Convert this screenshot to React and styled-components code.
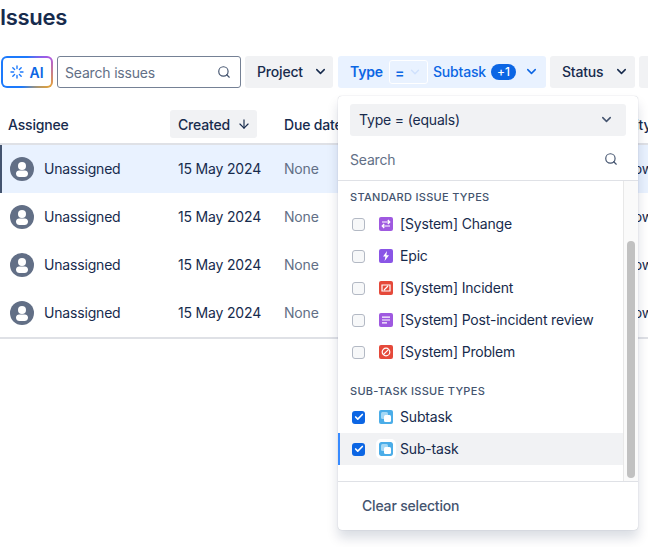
import React from 'react';
import styled, { createGlobalStyle } from 'styled-components';
import { ArrowDown, Check, ChevronDown, Search } from 'lucide-react';

const GlobalStyle = createGlobalStyle`
  html, body {
    margin: 0;
    padding: 0;
    background: #fff;
  }
  body {
    font-family: Inter, "Liberation Sans", sans-serif;
    color: #172b4d;
    font-size: 14px;
    letter-spacing: -0.18px;
  }
  * {
    box-sizing: border-box;
  }
`;

const Page = styled.div`
  position: relative;
  width: 648px;
  height: 547px;
  overflow: hidden;
`;

const Title = styled.h1`
  margin: 0;
  height: 56px;
  padding-top: 3px;
  font-size: 22px;
  line-height: 28px;
  font-weight: 600;
  letter-spacing: -0.3px;
`;

const Toolbar = styled.div`
  display: flex;
  gap: 4px;
  height: 32px;
  padding-left: 1px;
  width: 720px;
`;

const AiButton = styled.button`
  display: flex;
  align-items: center;
  justify-content: center;
  gap: 5px;
  width: 52px;
  height: 32px;
  padding: 0;
  border: 2px solid transparent;
  border-radius: 6px;
  background:
    linear-gradient(#fff, #fff) padding-box,
    conic-gradient(#1d7afc 0deg, #af59e1 58deg, #e2a13a 122deg, #1d7afc 200deg, #1d7afc 360deg) border-box;
  color: #0c66e4;
  font: 600 14px Inter, sans-serif;
`;

const SearchBox = styled.div`
  display: flex;
  align-items: center;
  justify-content: space-between;
  width: 184px;
  height: 32px;
  padding: 0 9px 0 7px;
  border: 1px solid #758195;
  border-radius: 3px;
  color: #626f86;
  font-size: 14px;
  svg {
    color: #44546f;
  }
`;

const FilterButton = styled.div`
  display: flex;
  flex: none;
  align-items: center;
  width: ${(p) => p.$width}px;
  height: 32px;
  margin-left: ${(p) => p.$gapLeft || 0}px;
  padding-left: 12px;
  padding-bottom: 1px;
  border-radius: 3px;
  background: ${(p) => (p.$active ? '#e9f2ff' : '#f1f2f4')};
  color: ${(p) => (p.$active ? '#0c66e4' : '#172b4d')};
  font-weight: 500;
`;

const FilterLabel = styled.span`
  flex: ${(p) => (p.$grow ? 1 : 'none')};
  font-weight: ${(p) => (p.$bold ? 600 : 500)};
`;

const FilterChevron = styled(ChevronDown).attrs({ size: 15, strokeWidth: 2.4 })`
  flex: none;
  margin-right: ${(p) => p.$right || 0}px;
`;

const OperatorBox = styled.span`
  display: flex;
  align-items: center;
  justify-content: space-between;
  width: 39px;
  height: 24px;
  margin: 1px 5px 0 6px;
  padding: 0 5px 0 5px;
  border: 1px solid #fff;
  border-radius: 3px;
  font-weight: 600;
  svg {
    color: #cfe1fd;
  }
`;

const CountBadge = styled.span`
  width: 25px;
  height: 16px;
  margin: 1px 8px 0 5px;
  border-radius: 8px;
  background: #0c66e4;
  color: #fff;
  font-size: 12px;
  line-height: 16px;
  text-align: center;
`;

const Table = styled.div`
  width: 648px;
  margin-top: 23px;
  border-bottom: 2px solid #dfe1e6;
`;

const HeaderRow = styled.div`
  display: flex;
  align-items: center;
  height: 34px;
  padding-bottom: 6px;
  border-bottom: 2px solid #dfe1e6;
  font-weight: 500;
  white-space: nowrap;
`;

const Row = styled.div`
  display: flex;
  align-items: center;
  height: 48px;
  padding-bottom: 1px;
  background: ${(p) => (p.$selected ? '#e9f2ff' : '#fff')};
  box-shadow: ${(p) => (p.$selected ? 'inset 2px 0 0 #44546f' : 'none')};
  white-space: nowrap;
`;

const Cell = styled.div`
  display: flex;
  flex: none;
  align-items: center;
  gap: ${(p) => p.$gap || 0}px;
  width: ${(p) => p.$width}px;
  padding-left: ${(p) => p.$pad ?? 8}px;
  color: ${(p) => (p.$muted ? '#626f86' : '#172b4d')};
`;

const SortPill = styled.div`
  display: flex;
  flex: none;
  align-items: center;
  gap: 7px;
  width: 87px;
  height: 28px;
  padding-left: 8px;
  border-radius: 3px;
  background: #f1f2f4;
  margin-right: 19px;
`;

const Popup = styled.div`
  position: absolute;
  left: 338px;
  top: 96px;
  display: flex;
  flex-direction: column;
  width: 300px;
  height: 434px;
  border-radius: 4px;
  background: #fff;
  box-shadow: 0 8px 12px rgba(9, 30, 66, 0.15), 0 0 1px rgba(9, 30, 66, 0.31);
`;

const OperatorSelect = styled.div`
  display: flex;
  align-items: center;
  justify-content: space-between;
  height: 32px;
  margin: 8px 12px 0;
  padding: 0 12px 1px 9px;
  border-radius: 3px;
  background: #f1f2f4;
  svg {
    color: #44546f;
  }
`;

const PopupSearch = styled.div`
  display: flex;
  align-items: center;
  justify-content: space-between;
  height: 45px;
  padding: 2px 20px 0 12px;
  border-bottom: 1px solid #dfe1e6;
  color: #626f86;
  svg {
    color: #44546f;
  }
`;

const ScrollArea = styled.div`
  display: flex;
  height: 301px;
  border-bottom: 1px solid #dfe1e6;
`;

const OptionList = styled.div`
  flex: 1;
  min-width: 0;
  padding-top: 10px;
`;

const GroupHeading = styled.div`
  height: 13px;
  margin: ${(p) => p.$top || 0}px 0 ${(p) => p.$bottom || 0}px;
  padding-left: 12px;
  color: #44546f;
  font-size: 11px;
  line-height: 13px;
  font-weight: 500;
  letter-spacing: 0.3px;
  text-transform: uppercase;
`;

const Option = styled.div`
  display: flex;
  align-items: center;
  height: 32px;
  margin-top: ${(p) => p.$top || 0}px;
  padding-left: 14px;
  background: ${(p) => (p.$active ? '#f1f2f4' : 'transparent')};
  box-shadow: ${(p) => (p.$active ? 'inset 2px 0 0 #388bff' : 'none')};
`;

const OptionLabel = styled.span`
  padding-bottom: 2px;
`;

const Box = styled.span`
  display: flex;
  align-items: center;
  justify-content: center;
  width: 13px;
  height: 13px;
  margin-right: 14px;
  border-radius: 3px;
  border: ${(p) => (p.$checked ? 'none' : '1px solid #b3b9c4')};
  background: ${(p) => (p.$checked ? '#0c66e4' : '#f7f8f9')};
  color: #fff;
`;

const TypeIcon = styled.span`
  display: flex;
  align-items: center;
  justify-content: center;
  width: 14px;
  height: 14px;
  margin-right: 7px;
  border-radius: 2px;
  background: ${(p) => p.$color};
  outline: ${(p) => (p.$ring ? '3px solid #fff' : 'none')};
`;

const ScrollTrack = styled.div`
  flex: none;
  width: 15px;
  padding: 60px 3px 3px 3px;
  border-left: 1px solid #e8e8e8;
  background: #fafafa;
`;

const ScrollThumb = styled.div`
  width: 8px;
  height: 237px;
  border-radius: 4px;
  background: #c1c1c1;
`;

const Footer = styled.div`
  padding: 15px 24px;
  color: #44546f;
  font-weight: 500;
  line-height: 17px;
`;

const PURPLE = '#9f59e0';
const RED = '#e5493a';
const BLUE = '#4bade8';

const Sparkle = () => (
  <svg width="14" height="14" viewBox="0 0 14 14" stroke="#1d7afc" strokeWidth="1.4" strokeLinecap="round">
    <path d="M7 1v2.6M7 10.4V13M1 7h2.6M10.4 7H13M2.8 2.8l1.8 1.8M9.4 9.4l1.8 1.8M11.2 2.8 9.4 4.6M4.6 9.4l-1.8 1.8" />
  </svg>
);

const Avatar = () => (
  <svg width="24" height="24" viewBox="0 0 24 24">
    <circle cx="12" cy="12" r="12" fill="#626f86" />
    <circle cx="12" cy="9" r="4" fill="#fff" />
    <path d="M6 16.5c0-2 1.6-3 3-3h6c1.4 0 3 1 3 3v.5a3.5 3.5 0 0 1-3.5 3h-5A3.5 3.5 0 0 1 6 17z" fill="#fff" />
  </svg>
);

const Glyph = ({ children, fill }) => (
  <svg width="10" height="10" viewBox="0 0 10 10" fill={fill || 'none'} stroke={fill ? 'none' : '#fff'} strokeWidth="1.2">
    {children}
  </svg>
);

const icons = {
  change: (
    <Glyph>
      <path d="M1 3h7.5M6.8 1 8.8 3 6.8 5M9 7H1.5M3.2 5 1.2 7l2 2" />
    </Glyph>
  ),
  epic: (
    <Glyph fill="#fff">
      <path d="M6 0 2 5.6h2.4L3.6 10 8 4.2H5.4z" />
    </Glyph>
  ),
  incident: (
    <Glyph>
      <path d="M1 2h8v6H1zM3 7l4-4" />
    </Glyph>
  ),
  review: (
    <Glyph>
      <path d="M1 2.2h8M1 5h8M1 7.8h5" />
    </Glyph>
  ),
  problem: (
    <Glyph>
      <circle cx="5" cy="5" r="3.8" />
      <path d="M2.4 7.6 7.6 2.4" />
    </Glyph>
  ),
  subtask: (
    <svg width="10" height="10" viewBox="0 0 10 10">
      <rect x="0" y="0" width="7" height="7" rx="1.5" fill="#a5d8f5" />
      <rect x="3" y="3" width="7" height="7" rx="1.5" fill="#fff" />
    </svg>
  ),
};

const standardTypes = [
  { label: '[System] Change', color: PURPLE, icon: 'change' },
  { label: 'Epic', color: '#8a55e6', icon: 'epic' },
  { label: '[System] Incident', color: RED, icon: 'incident' },
  { label: '[System] Post-incident review', color: PURPLE, icon: 'review' },
  { label: '[System] Problem', color: RED, icon: 'problem' },
];

const rows = [true, false, false, false];

export default function App() {
  return (
    <Page>
      <GlobalStyle />
      <Title>Issues</Title>
      <Toolbar>
        <AiButton>
          <Sparkle />
          AI
        </AiButton>
        <SearchBox>
          Search issues
          <Search size={14} strokeWidth={2} />
        </SearchBox>
        <FilterButton $width={88}>
          <FilterLabel $grow>Project</FilterLabel>
          <FilterChevron $right={5} />
        </FilterButton>
        <FilterButton $width={208} $active $gapLeft={1}>
          <FilterLabel $bold>Type</FilterLabel>
          <OperatorBox>
            =
            <ChevronDown size={14} strokeWidth={2.4} />
          </OperatorBox>
          <FilterLabel>Subtask</FilterLabel>
          <CountBadge>+1</CountBadge>
          <FilterChevron />
        </FilterButton>
        <FilterButton $width={85}>
          <FilterLabel $grow>Status</FilterLabel>
          <FilterChevron $right={6} />
        </FilterButton>
        <FilterButton $width={40} />
      </Toolbar>
      <Table>
        <HeaderRow>
          <Cell $width={170}>Assignee</Cell>
          <SortPill>
            Created
            <ArrowDown size={14} strokeWidth={2} />
          </SortPill>
          <Cell $width={320}>Due date</Cell>
          <Cell $width={60}>Priority</Cell>
        </HeaderRow>
        {rows.map((selected, i) => (
          <Row key={i} $selected={selected}>
            <Cell $width={170} $pad={10} $gap={10}>
              <Avatar />
              Unassigned
            </Cell>
            <Cell $width={106}>15 May 2024</Cell>
            <Cell $width={320} $muted>
              None
            </Cell>
            <Cell $width={60} $pad={30}>
              Low
            </Cell>
          </Row>
        ))}
      </Table>
      <Popup>
        <OperatorSelect>
          Type = (equals)
          <ChevronDown size={15} strokeWidth={2.4} />
        </OperatorSelect>
        <PopupSearch>
          Search
          <Search size={14} strokeWidth={2} />
        </PopupSearch>
        <ScrollArea>
          <OptionList>
            <GroupHeading $bottom={4}>Standard issue types</GroupHeading>
            {standardTypes.map((t) => (
              <Option key={t.label}>
                <Box />
                <TypeIcon $color={t.color}>{icons[t.icon]}</TypeIcon>
                <OptionLabel>{t.label}</OptionLabel>
              </Option>
            ))}
            <GroupHeading $top={17}>Sub-task issue types</GroupHeading>
            <Option $top={3}>
              <Box $checked>
                <Check size={10} strokeWidth={4} />
              </Box>
              <TypeIcon $color={BLUE}>{icons.subtask}</TypeIcon>
              <OptionLabel>Subtask</OptionLabel>
            </Option>
            <Option $active>
              <Box $checked>
                <Check size={10} strokeWidth={4} />
              </Box>
              <TypeIcon $color={BLUE} $ring>
                {icons.subtask}
              </TypeIcon>
              <OptionLabel>Sub-task</OptionLabel>
            </Option>
          </OptionList>
          <ScrollTrack>
            <ScrollThumb />
          </ScrollTrack>
        </ScrollArea>
        <Footer>Clear selection</Footer>
      </Popup>
    </Page>
  );
}
